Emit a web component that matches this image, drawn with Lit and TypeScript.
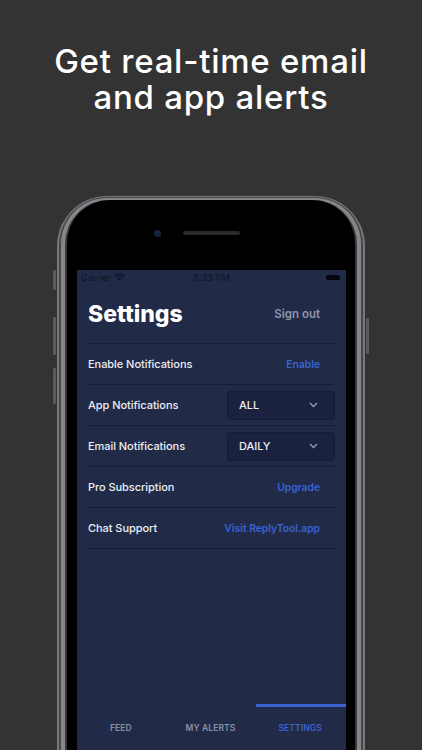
import { LitElement, html, css } from "lit";
import { customElement } from "lit/decorators.js";

@customElement("app-root")
export class AppRoot extends LitElement {
  static styles = css`
    :host { display: block; width: 422px; height: 750px; overflow: hidden; background: #333333; font-family: Inter, "Liberation Sans", sans-serif; }
    h1 { margin: 0; padding-top: 43px; height: 196px; box-sizing: border-box; text-align: center; color: #fff; font: 500 33px/36px Inter, "Liberation Sans", sans-serif; letter-spacing: 0.75px; }
    .phone { position: relative; box-sizing: border-box; width: 308px; height: 640px; margin-left: 57px; padding: 1px 2px 0; border-radius: 50px 50px 0 0; background: #77777c; }
    .ring1 { box-sizing: border-box; height: 100%; padding: 1px 2px 0; border-radius: 48px 48px 0 0; background: #47474b; }
    .ring2 { box-sizing: border-box; height: 100%; padding: 2px 4px 0; border-radius: 46px 46px 0 0; background: #85858a; }
    .ring3 { box-sizing: border-box; height: 100%; padding: 0 2px 0; border-radius: 44px 44px 0 0; background: #3a3a3d; }
    .bezel { box-sizing: border-box; height: 100%; padding: 0 9px 0 10px; border-radius: 43px 43px 0 0; background: #000; display: flex; flex-direction: column; }
    .top { height: 70px; flex: none; display: flex; align-items: center; padding-bottom: 4px; box-sizing: border-box; }
    .cam { width: 7px; height: 7px; border-radius: 50%; background: #16233f; margin-left: 77px; }
    .speaker { width: 57px; height: 4px; border-radius: 2px; background: #2a2a2c; margin-left: 22px; }
    .screen { width: 269px; height: 480px; flex: none; background: #212b47; display: flex; flex-direction: column; }
    .status { height: 14px; flex: none; padding: 0 6px 0 4px; display: flex; align-items: center; color: #0e1428; font-size: 9px; position: relative; }
    .carrier { letter-spacing: 0.1px; }
    .status svg { margin-left: 3px; }
    .time { position: absolute; left: 0; right: 0; text-align: center; letter-spacing: .2px; }
    .batt { margin-left: auto; width: 14px; height: 5px; border-radius: 1.5px; background: #05070f; }
    .body { padding: 0 11px; flex: 1; }
    .head { height: 60px; box-sizing: border-box; display: flex; justify-content: space-between; align-items: center; padding-right: 15px; border-bottom: 1px solid #161d35; }
    .title { color: #fff; font-weight: 800; font-size: 23px; }
    .signout { color: #8f95a9; font-weight: 600; font-size: 11.5px; }
    .row { height: 41px; box-sizing: border-box; display: flex; justify-content: space-between; align-items: center; border-bottom: 1px solid #161d35; color: #eceef3; font-size: 11px; font-weight: 500; letter-spacing: -0.05px; }
    .link { color: #3a62d2; font-weight: 600; font-size: 10.3px; padding-right: 15px; letter-spacing: 0; }
    .sel { box-sizing: border-box; width: 108px; height: 29px; background: #1a2240; border: 1px solid #161c35; border-radius: 3px; display: flex; justify-content: space-between; align-items: center; padding: 0 16px 0 11px; color: #eceef3; font-size: 11px; font-weight: 500; }
    .tabs { flex: none; display: grid; grid-template-columns: repeat(3, 1fr); }
    .tab { display: flex; align-items: center; justify-content: center; padding: 0 2px 2px 0; color: #8a90a6; font-size: 8.5px; font-weight: 600; letter-spacing: .1px; border-top: 3px solid transparent; height: 46px; box-sizing: border-box; }
    .tab.on { color: #3a62d2; border-top-color: #3a62d2; }
    .btn { position: absolute; width: 3px; background: #5a5a5e; border-radius: 1px; }
    .b1 { left: -4px; top: 74px; height: 20px; }
    .b2 { left: -4px; top: 121px; height: 38px; }
    .b3 { left: -4px; top: 172px; height: 36px; }
    .b4 { right: -4px; top: 122px; height: 36px; }
  `;

  private chev() {
    return html`<svg width="9" height="6" viewBox="0 0 9 6" fill="none" stroke="#9aa0b3" stroke-width="1.3"><path d="M1 1l3.5 3.5L8 1"/></svg>`;
  }

  private row(label: string, right: unknown) {
    return html`<div class="row"><span>${label}</span>${right}</div>`;
  }

  render() {
    return html`
      <h1>Get real-time email<br />and app alerts</h1>
      <div class="phone">
        <div class="btn b1"></div>
        <div class="btn b2"></div>
        <div class="btn b3"></div>
        <div class="btn b4"></div>
        <div class="ring1"><div class="ring2"><div class="ring3"><div class="bezel">
          <div class="top"><div class="cam"></div><div class="speaker"></div></div>
          <div class="screen">
            <div class="status">
              <span class="carrier">Carrier</span>
              <svg width="11" height="8" viewBox="0 0 11 8" fill="none" stroke="#0a0f20" stroke-width="1.1"><path d="M.6 2.8a7 7 0 0 1 9.8 0M2.3 4.5a4.6 4.6 0 0 1 6.4 0"/><path d="M5.5 7.6L3.9 6a2.3 2.3 0 0 1 3.2 0z" fill="#0a0f20" stroke="none"/></svg>
              <span class="time">3:33 PM</span>
              <span class="batt"></span>
            </div>
            <div class="body">
              <div class="head"><span class="title">Settings</span><span class="signout">Sign out</span></div>
              ${this.row("Enable Notifications", html`<span class="link">Enable</span>`)}
              ${this.row("App Notifications", html`<div class="sel"><span>ALL</span>${this.chev()}</div>`)}
              ${this.row("Email Notifications", html`<div class="sel"><span>DAILY</span>${this.chev()}</div>`)}
              ${this.row("Pro Subscription", html`<span class="link">Upgrade</span>`)}
              ${this.row("Chat Support", html`<span class="link">Visit ReplyTool.app</span>`)}
            </div>
            <div class="tabs">
              <div class="tab">FEED</div>
              <div class="tab">MY ALERTS</div>
              <div class="tab on">SETTINGS</div>
            </div>
          </div>
        </div></div></div></div>
      </div>
    `;
  }
}
